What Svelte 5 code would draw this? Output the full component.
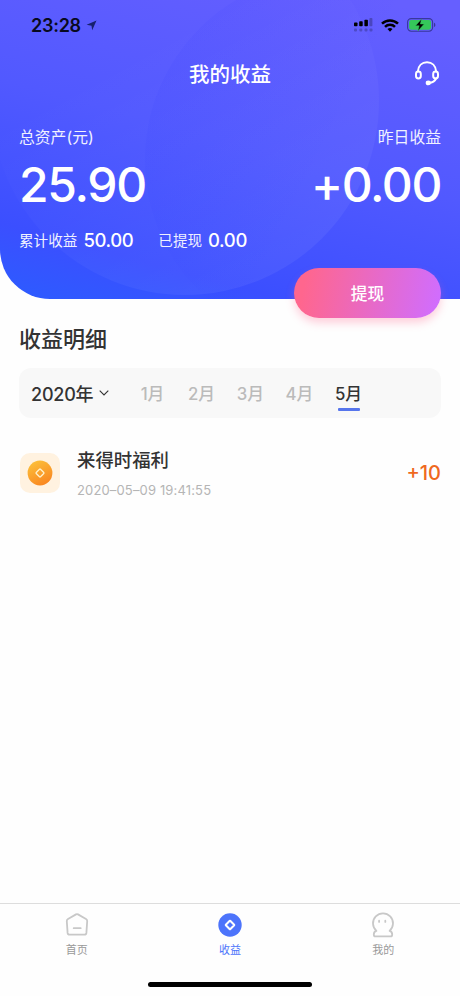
<script>
  const months = ['1月', '2月', '3月', '4月', '5月'];
  let active = $state('5月');
</script>

<div class="screen">
  <section class="hero">
    <svg class="rings" viewBox="0 0 460 299" preserveAspectRatio="none" aria-hidden="true">
      <defs>
        <linearGradient id="ringA" x1="0.2" y1="0" x2="0.75" y2="1">
          <stop offset="0.35" stop-color="#fff" stop-opacity="0" />
          <stop offset="1" stop-color="#fff" stop-opacity="0.06" />
        </linearGradient>
        <linearGradient id="ringB" x1="0" y1="0.3" x2="0.6" y2="0.6">
          <stop offset="0" stop-color="#2530ff" stop-opacity="0.07" />
          <stop offset="0.8" stop-color="#2530ff" stop-opacity="0" />
        </linearGradient>
      </defs>
      <circle cx="185" cy="101" r="194" fill="url(#ringA)" />
      <circle cx="331" cy="160" r="186" fill="url(#ringB)" />
    </svg>

    <div class="status">
      <span class="time">23:28</span>
      <svg class="arrow" width="11" height="11" viewBox="0 0 11 11"><path d="M10.5.5 6.2 10.3 5.5 5.7.6 4.8Z" fill="#17206e" /></svg>
      <svg class="signal" width="20" height="15" viewBox="0 0 20 15">
        <rect x="0" y="4.4" width="3.5" height="3.8" rx=".8" />
        <rect x="5.2" y="3.2" width="3.5" height="5" rx=".8" />
        <rect x="10.4" y="1.8" width="3.5" height="6.4" rx=".8" />
        <rect x="15.4" y="0" width="3" height="8.2" rx=".8" opacity=".25" />
        <g opacity=".22"><rect x="0" y="10.5" width="3" height="3" rx="1" /><rect x="5.3" y="10.5" width="3" height="3" rx="1" /><rect x="10.5" y="10.5" width="3" height="3" rx="1" /><rect x="15.5" y="10.5" width="3" height="3" rx="1" /></g>
      </svg>
      <svg class="wifi" width="18" height="13" viewBox="0 0 18 13">
        <path d="M1 4.7a11.3 11.3 0 0 1 16 0M4 7.9a7.1 7.1 0 0 1 10 0" fill="none" stroke="#000" stroke-width="2.5" />
        <path d="m9 12.7-2.5-2.6a3.6 3.6 0 0 1 5 0Z" />
      </svg>
      <svg class="battery" width="29" height="14" viewBox="0 0 29 14">
        <rect x=".6" y=".6" width="25" height="12.6" rx="3.6" fill="none" stroke="#38379c" stroke-width="1.1" />
        <rect x="2.1" y="2.1" width="22" height="9.6" rx="2.1" fill="#35c75a" />
        <path d="M27 4.7c1.8.6 1.8 3.8 0 4.4Z" fill="#38379c" />
        <path d="m14.5 1-6 6.8h3.7L10.9 13l6.3-7h-3.8Z" stroke="#35c75a" stroke-width=".5" />
      </svg>
    </div>

    <header>
      <h1>我的收益</h1>
      <svg class="headset" width="26" height="26" viewBox="0 0 26 26" fill="none" stroke="#fff" stroke-width="2" stroke-linecap="round">
        <path d="M3.9 11.4C4.3 5.8 8 2.3 13 2.3s8.7 3.5 9.1 9.1" />
        <rect x="2" y="11.6" width="4.8" height="6.8" rx="2.4" />
        <rect x="19.2" y="11.6" width="4.8" height="6.8" rx="2.4" />
        <path d="M22.1 18.5c-1.2 2.6-3.6 4.2-7 4.4" />
        <ellipse cx="14.3" cy="22.9" rx="1.6" ry="1.3" fill="#fff" />
      </svg>
    </header>

    <div class="row labels"><span>总资产(元)</span><span>昨日收益</span></div>
    <div class="row amounts"><strong>25.90</strong><strong class="plus">+0.00</strong></div>
    <div class="totals">
      <span>累计收益</span><b>50.00</b>
      <span class="second">已提现</span><b>0.00</b>
    </div>
    <button class="withdraw">提现</button>
  </section>

  <main>
    <h2>收益明细</h2>
    <div class="filter">
      <div class="year">2020年
        <svg width="10" height="6" viewBox="0 0 10 6"><path d="m.7.7 4.3 4.3L9.3.7" fill="none" stroke="#333" stroke-width="1.1" /></svg>
      </div>
      <div class="months">
        {#each months as month}
          <button class="month" class:active={active === month} onclick={() => (active = month)}>{month}</button>
        {/each}
      </div>
    </div>
    <article>
      <div class="coin">
        <svg width="26" height="26" viewBox="0 0 26 26">
          <defs><linearGradient id="gold" x1=".2" y1="0" x2=".7" y2="1"><stop stop-color="#fcc13a" /><stop offset="1" stop-color="#f98520" /></linearGradient></defs>
          <circle cx="13" cy="13" r="12.4" fill="url(#gold)" />
          <rect x="10" y="10" width="6" height="6" rx=".7" transform="rotate(45 13 13)" fill="none" stroke="#fff2cd" stroke-width="1.3" />
        </svg>
      </div>
      <div class="detail">
        <h3>来得时福利</h3>
        <time>2020–05–09 19:41:55</time>
      </div>
      <span class="gain">+10</span>
    </article>
  </main>

  <nav>
    <div class="tab">
      <svg width="26" height="26" viewBox="0 0 26 26" fill="none" stroke="#c8c8c8" stroke-width="1.8" stroke-linejoin="round" stroke-linecap="round">
        <path d="M12 2.4q1-.5 2 0l8 4.6q1.3.8 1.2 2.2l-.8 11.7q-.2 1.8-2.1 1.8H5.7q-1.9 0-2.1-1.8L2.8 9.2Q2.7 7.8 4 7Z" />
        <path d="M9.7 16.2h7" />
      </svg>
      <span>首页</span>
    </div>
    <div class="tab on">
      <svg width="26" height="26" viewBox="0 0 26 26">
        <circle cx="13" cy="13" r="11.7" fill="#4d74fb" />
        <rect x="9.9" y="9.9" width="6.2" height="6.2" rx=".3" transform="rotate(45 13 13)" fill="none" stroke="#fff" stroke-width="2" />
      </svg>
      <span>收益</span>
    </div>
    <div class="tab">
      <svg width="26" height="26" viewBox="0 0 26 26" fill="none" stroke="#c8c8c8" stroke-width="1.8" stroke-linejoin="round" stroke-linecap="round">
        <path d="M6.4 18.9A10 10 0 1 1 19.6 18.9C21.2 19.3 22.2 20.6 22.2 22.4c0 1.5-.6 2-1.6 2H5.4c-1 0-1.6-.5-1.6-2 0-1.8 1-3.1 2.6-3.5Z" />
        <path d="M9.1 8.7v1.2M15.3 8.7v1.2" />
      </svg>
      <span>我的</span>
    </div>
    <div class="home"></div>
  </nav>
</div>

<style>
  :global(body) { margin: 0; background: #fff; }
  .screen { width: 460px; height: 996px; display: flex; flex-direction: column; overflow: hidden; background: #fefefe; color: #333; font-family: Inter, "Noto Sans CJK SC", sans-serif; }
  .screen * { box-sizing: border-box; }
  h1, h2, h3 { margin: 0; font-weight: 500; }
  button { border: 0; padding: 0; background: none; font: inherit; }
  .hero { position: relative; flex: none; height: 299px; color: #fff; border-bottom-left-radius: 50px; background: linear-gradient(195deg, #665fff 5%, #5159ff 48%, #3b4fff 82%, #2c5cff 100%); }
  .rings { position: absolute; inset: 0; width: 100%; height: 100%; border-bottom-left-radius: 50px; }
  .status { position: relative; height: 50px; padding: 0 24px 0 31px; display: flex; align-items: center; color: #080a20; }
  .time { padding-top: 2px; font-size: 18px; font-weight: 600; line-height: 24px; width: 50px; letter-spacing: -.25px; }
  .arrow { margin-left: 5px; }
  .signal { margin-left: auto; }
  .wifi { margin-left: 7px; }
  .battery { margin-left: 8px; }
  header { position: relative; height: 48px; display: flex; justify-content: center; align-items: center; padding-top: 2px; }
  h1 { font-size: 20.5px; line-height: 30px; }
  .headset { position: absolute; right: 20px; top: 10px; }
  .row { position: relative; display: flex; justify-content: space-between; padding: 0 19px; }
  .labels { margin-top: 29px; height: 22px; font-size: 15.8px; line-height: 22px; opacity: .92; }
  .amounts { height: 73px; line-height: 72px; font-size: 48px; }
  .amounts strong { font-weight: 500; letter-spacing: -1.3px; }
  .amounts .plus { margin-right: 0; letter-spacing: -1.4px; }
  .totals { position: relative; display: flex; align-items: center; padding-left: 19px; height: 36px; font-size: 14.6px; }
  .totals span { opacity: .92; margin-top: -1px; }
  .totals b { font-weight: 500; font-size: 18.5px; margin-left: 6px; letter-spacing: -.4px; }
  .totals .second { margin-left: 25px; }
  .withdraw { position: absolute; right: 19px; bottom: -19px; width: 147px; height: 50px; border-radius: 26px; color: #fff; font-size: 16.7px; font-weight: 500; background: linear-gradient(100deg, #ff668e 8%, #d06dff 98%); box-shadow: 0 5px 8px #ff668e4d; }
  main { flex: 1; padding: 23px 19px 0; }
  h2 { font-size: 22px; line-height: 34px; }
  .filter { display: flex; align-items: center; margin-top: 12px; height: 50px; border-radius: 12px; background: #f8f8f8; padding-left: 12px; }
  .year { display: flex; align-items: center; gap: 6px; width: 97px; font-size: 18px; font-weight: 500; letter-spacing: -.2px; }
  .months { display: flex; }
  .month { position: relative; width: 49px; height: 50px; font-size: 16.8px; font-weight: 500; color: #bbb; }
  .month.active { color: #333; }
  .month.active::after { content: ""; position: absolute; left: 14px; bottom: 7px; width: 22px; height: 3px; border-radius: 1px; background: #5675ec; }
  article { display: flex; align-items: center; margin-top: 26px; height: 58px; }
  .coin { display: flex; align-items: center; justify-content: center; width: 40px; height: 40px; margin: -1px 17px 0 1px; border-radius: 10px; background: #fff2e0; }
  .detail { flex: 1; padding-top: 2px; }
  h3 { font-size: 18.4px; line-height: 30px; }
  time { display: block; margin-top: 3px; font-size: 13px; line-height: 25px; letter-spacing: .15px; color: #b5b5b5; }
  .gain { font-size: 20px; font-weight: 500; color: #ef681e; }
  nav { position: relative; flex: none; height: 93px; border-top: 1px solid #ddd; display: flex; }
  .tab { flex: 1; display: flex; flex-direction: column; align-items: center; padding-top: 8px; color: #999; font-size: 11px; }
  .tab span { margin-top: 3px; line-height: 18px; }
  .tab.on { color: #4d74fb; }
  .home { position: absolute; left: 148px; bottom: 9px; width: 164px; height: 5px; border-radius: 3px; background: #000; }
</style>
